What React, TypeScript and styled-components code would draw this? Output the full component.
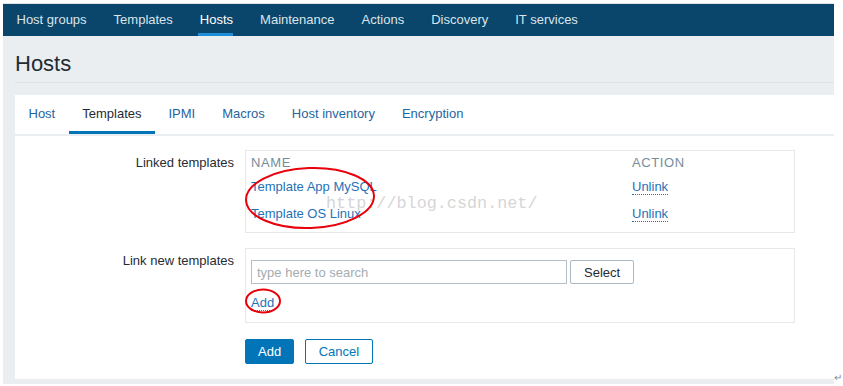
import * as React from 'react';
import styled, { createGlobalStyle, css } from 'styled-components';

const GlobalStyle = createGlobalStyle`
  html, body {
    margin: 0;
    padding: 0;
    background: #ffffff;
  }
  body {
    font-family: "Liberation Sans", Arial, sans-serif;
    font-size: 13px;
    color: #1f2c33;
  }
`;

const Page = styled.div`
  position: relative;
  width: 843px;
  height: 386px;
  overflow: hidden;
`;

const Frame = styled.div`
  margin: 3px 0 0 3px;
  width: 831px;
  border-top: 1px solid #dfe4e8;
`;

const TopNav = styled.nav`
  display: flex;
  height: 32px;
  background: #0a466b;
`;

const NavItem = styled.a<{ active?: boolean }>`
  display: flex;
  align-items: stretch;
  padding: 0 13.5px;
  color: ${p => (p.active ? '#ffffff' : '#dbe4ea')};
  text-decoration: none;
  line-height: 32px;
`;

const NavLabel = styled.span<{ active?: boolean }>`
  position: relative;
  ${p => p.active && css`
    &::after {
      content: '';
      position: absolute;
      left: -2px;
      right: 0;
      bottom: 0;
      height: 3px;
      background: #1d8fd6;
    }
  `}
`;

const Main = styled.div`
  background: #ebeef0;
  padding: 0 0 5px 12px;
`;

const Header = styled.div`
  height: 47px;
  border-bottom: 1px solid #dde2e5;
  box-sizing: border-box;
  padding-top: 16px;
`;

const Title = styled.h1`
  margin: 0;
  font-weight: normal;
  font-size: 22px;
  line-height: 24px;
  color: #1f2c33;
`;

const Panel = styled.section`
  margin-top: 12px;
  background: #ffffff;
  padding-bottom: 15px;
`;

const TabList = styled.div`
  display: flex;
  border-bottom: 2px solid #ebeef0;
`;

const Tab = styled.a<{ active?: boolean }>`
  padding: 0 13.5px;
  height: 36px;
  line-height: 38px;
  overflow: hidden;
  border-bottom: 3px solid ${p => (p.active ? '#0275b8' : 'transparent')};
  color: ${p => (p.active ? '#1f2c33' : '#1f65a1')};
  text-decoration: none;
`;

const Form = styled.div`
  padding-top: 14px;
`;

const FormRow = styled.div<{ spacing?: number }>`
  display: grid;
  grid-template-columns: 219px 550px;
  column-gap: 11px;
  margin-top: ${p => p.spacing ?? 0}px;
`;

const Label = styled.div`
  text-align: right;
  padding-top: 5px;
  line-height: 16px;
  color: #1f2c33;
`;

const FieldBox = styled.div<{ pad?: string }>`
  border: 1px solid #e6e9eb;
  padding: ${p => p.pad ?? '0 5px 5px'};
`;

const Table = styled.div`
  display: grid;
  grid-template-columns: 381px 1fr;
`;

const HeadCell = styled.div`
  height: 22px;
  line-height: 24px;
  color: #768d99;
  letter-spacing: 0.6px;
`;

const Cell = styled.div`
  height: 27px;
  line-height: 27px;
`;

const Link = styled.a<{ dotted?: boolean }>`
  color: #1f72b8;
  text-decoration: none;
  ${p => p.dotted && css`
    border-bottom: 1px dotted #1f72b8;
  `}
`;

const SearchRow = styled.div`
  display: flex;
  gap: 3px;
`;

const SearchInput = styled.input`
  box-sizing: border-box;
  width: 316px;
  height: 24px;
  border: 1px solid #b4bfc5;
  padding: 0 5px;
  font-family: "Liberation Sans", Arial, sans-serif;
  font-size: 13px;
  color: #1f2c33;
  &::placeholder {
    color: #a4acb1;
  }
`;

const Button = styled.button<{ variant?: 'primary' | 'outline' | 'plain' }>`
  box-sizing: border-box;
  height: 24px;
  padding: 0 12px;
  font-family: "Liberation Sans", Arial, sans-serif;
  font-size: 13px;
  border-radius: 2px;
  cursor: pointer;
  ${p => {
    switch (p.variant) {
      case 'primary':
        return css`
          background: #0275b8;
          border: 1px solid #0275b8;
          color: #ffffff;
          height: 25px;
        `;
      case 'outline':
        return css`
          background: #ffffff;
          border: 1px solid #0275b8;
          color: #0275b8;
          height: 25px;
          padding: 0 12.5px;
        `;
      default:
        return css`
          background: #ffffff;
          border: 1px solid #a9b8c2;
          color: #1f2c33;
          padding: 0 13px;
        `;
    }
  }}
`;

const AddLine = styled.div`
  margin-top: 11px;
  line-height: 16px;
`;

const Actions = styled.div`
  display: flex;
  gap: 11px;
  margin-top: 16px;
`;

const Overlay = styled.svg`
  position: absolute;
  left: 0;
  top: 0;
  pointer-events: none;
`;

const Watermark = styled.span`
  position: absolute;
  left: 326px;
  top: 194px;
  font-family: "Liberation Mono", "Courier New", monospace;
  font-size: 16.8px;
  line-height: 20px;
  color: #d6d6d6;
  pointer-events: none;
`;

const ReturnMark = styled.span`
  position: absolute;
  left: 834px;
  top: 372px;
  font-size: 10px;
  color: #8a8a8a;
`;

const navItems = ['Host groups', 'Templates', 'Hosts', 'Maintenance', 'Actions', 'Discovery', 'IT services'];
const tabs = ['Host', 'Templates', 'IPMI', 'Macros', 'Host inventory', 'Encryption'];
const linked = ['Template App MySQL', 'Template OS Linux'];

export default function App() {
  return (
    <Page>
      <GlobalStyle />
      <Frame>
        <TopNav>
          {navItems.map(item => (
            <NavItem key={item} active={item === 'Hosts'}>
              <NavLabel active={item === 'Hosts'}>{item}</NavLabel>
            </NavItem>
          ))}
        </TopNav>
        <Main>
          <Header>
            <Title>Hosts</Title>
          </Header>
          <Panel>
            <TabList>
              {tabs.map(t => (
                <Tab key={t} active={t === 'Templates'}>{t}</Tab>
              ))}
            </TabList>
            <Form>
              <FormRow>
                <Label>Linked templates</Label>
                <FieldBox>
                  <Table>
                    <HeadCell>NAME</HeadCell>
                    <HeadCell>ACTION</HeadCell>
                    {linked.map(name => (
                      <React.Fragment key={name}>
                        <Cell><Link>{name}</Link></Cell>
                        <Cell><Link dotted>Unlink</Link></Cell>
                      </React.Fragment>
                    ))}
                  </Table>
                </FieldBox>
              </FormRow>
              <FormRow spacing={15}>
                <Label>Link new templates</Label>
                <FieldBox pad="11px 5px 11px">
                  <SearchRow>
                    <SearchInput placeholder="type here to search" />
                    <Button>Select</Button>
                  </SearchRow>
                  <AddLine><Link dotted>Add</Link></AddLine>
                </FieldBox>
              </FormRow>
              <FormRow>
                <div />
                <Actions>
                  <Button variant="primary">Add</Button>
                  <Button variant="outline">Cancel</Button>
                </Actions>
              </FormRow>
            </Form>
          </Panel>
        </Main>
      </Frame>
      <Watermark>http://blog.csdn.net/</Watermark>
      <ReturnMark>↵</ReturnMark>
      <Overlay width={843} height={386} viewBox="0 0 843 386">
        <ellipse cx={310} cy={198} rx={64} ry={30} fill="none" stroke="#e8000b" strokeWidth={2} transform="rotate(-2 310 198)" />
        <ellipse cx={263} cy={301} rx={17} ry={11.5} fill="none" stroke="#e8000b" strokeWidth={2} />
      </Overlay>
    </Page>
  );
}
